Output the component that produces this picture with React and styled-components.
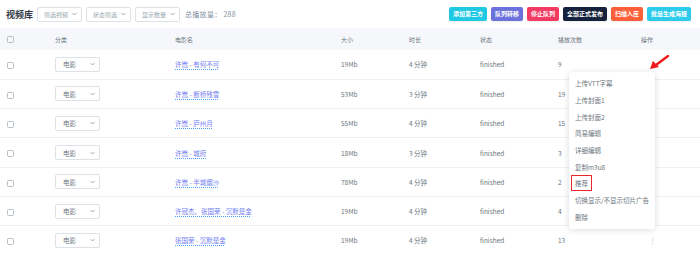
import styled, { createGlobalStyle } from "styled-components";

const GlobalStyle = createGlobalStyle`
  html, body {
    margin: 0;
    padding: 0;
    background: #fff;
    font-family: "Noto Sans CJK SC", "Noto Sans", sans-serif;
  }
`;

const Page = styled.div`
  position: relative;
  width: 700px;
  height: 255px;
  overflow: hidden;
  background: #fff;
`;

const Toolbar = styled.div`
  display: flex;
  align-items: center;
  height: 28px;
  padding: 0 6px;
  gap: 4px;
`;

const Title = styled.span`
  font-size: 9px;
  font-weight: 700;
  color: #313a46;
`;

const FilterSelect = styled.div`
  display: flex;
  align-items: center;
  justify-content: space-between;
  box-sizing: border-box;
  width: 45px;
  height: 15px;
  padding: 0 4px 0 6px;
  border: 1px solid #dee2e6;
  border-radius: 2px;
  font-size: 6px;
  color: #98a6ad;
  background: #fff;
`;

const Total = styled.span`
  font-size: 7px;
  color: #8391a2;
  margin-left: 1px;
  letter-spacing: 0.3px;
`;

const Spacer = styled.div`
  flex: 1;
`;

const Buttons = styled.div`
  display: flex;
  gap: 4px;
  margin-right: 3px;
`;

const ActionButton = styled.button`
  height: 14px;
  padding: 0 4px;
  border: none;
  border-radius: 2px;
  background: ${(p) => p.$bg};
  color: #fff;
  font-family: "Noto Sans CJK SC", sans-serif;
  font-weight: 700;
  font-size: 6px;
  line-height: 14px;
  box-shadow: 0 1px 2px rgba(0, 0, 0, 0.08);
`;

const Table = styled.table`
  width: 700px;
  border-collapse: collapse;
  table-layout: fixed;
  font-size: 6.5px;
  color: #6c757d;
`;

const HeadCell = styled.th`
  height: 22px;
  padding: 0;
  text-align: left;
  font-weight: 400;
  font-size: 6px;
  color: #6c757d;
  background: #f5f7fa;
  width: ${(p) => p.$w}px;
  padding-left: ${(p) => p.$pl || 0}px;
`;

const Row = styled.tr`
  height: 29.3px;
  border-bottom: 1px solid #eef1f4;
`;

const Cell = styled.td`
  padding: 0;
  padding-left: ${(p) => p.$pl || 0}px;
  vertical-align: middle;
`;

const Check = styled.span`
  display: inline-block;
  width: 5px;
  height: 5px;
  border: 1px solid #b7bec6;
  border-radius: 1.5px;
  vertical-align: middle;
`;

const TypeSelect = styled(FilterSelect)`
  color: #6c757d;
  padding-left: 7px;
  font-size: 6.5px;
`;

const FilmLink = styled.span`
  color: #727cf5;
  text-decoration: underline dotted #4aa3ff;
  text-underline-offset: 1.5px;
`;

const Dots = styled.span`
  display: inline-block;
  margin-left: 8px;
  color: ${(p) => (p.$light ? "#d5d9de" : "#a0a8b1")};
  font-size: 7px;
  font-weight: 700;
`;

const Menu = styled.div`
  position: absolute;
  left: 569px;
  top: 72px;
  width: 86px;
  padding: 3px 0 4px;
  background: #fff;
  border-radius: 3px;
  box-shadow: 0 1px 6px rgba(49, 58, 70, 0.18);
  display: flex;
  flex-direction: column;
`;

const MenuItem = styled.div`
  height: 16.7px;
  display: flex;
  align-items: center;
  padding-left: 6px;
  font-size: 6.5px;
  color: #6c757d;
`;

const Marked = styled.span`
  border: 1px solid #e8262c;
  padding: 2px 3px;
  margin-left: -4px;
`;

const Arrow = styled.svg`
  position: absolute;
  left: 648px;
  top: 55px;
`;

const Chevron = () => (
  <svg width="5" height="4" viewBox="0 0 10 6">
    <path d="M1 1l4 4 4-4" fill="none" stroke="#8a949e" strokeWidth="1.6" />
  </svg>
);

const buttons = [
  ["添加第三方", "#1fc8e3"],
  ["队列转移", "#6b72dc"],
  ["停止队列", "#f23a62"],
  ["全部正式发布", "#16213c"],
  ["扫描入库", "#fb5f3a"],
  ["批量生成海报", "#2ccbec"],
];

const rows = [
  ["许嵩 - 有何不可", "19Mb", 4, 9],
  ["许嵩 - 断桥残雪", "53Mb", 3, 19],
  ["许嵩 - 庐州月", "55Mb", 4, 15],
  ["许嵩 - 城府", "18Mb", 3, 3],
  ["许嵩 - 半城烟沙", "78Mb", 4, 2],
  ["许冠杰、张国荣 - 沉默是金", "19Mb", 4, 4],
  ["张国荣 - 沉默是金", "19Mb", 4, 13],
];

const menuItems = [
  "上传VTT字幕",
  "上传封面1",
  "上传封面2",
  "简易编辑",
  "详细编辑",
  "复制m3u8",
  "推荐",
  "切换显示/不显示切片广告",
  "删除",
];

export default function App() {
  return (
    <Page>
      <GlobalStyle />
      <Toolbar>
        <Title>视频库</Title>
        <FilterSelect>
          筛选视频 <Chevron />
        </FilterSelect>
        <FilterSelect>
          状态筛选 <Chevron />
        </FilterSelect>
        <FilterSelect>
          显示数量 <Chevron />
        </FilterSelect>
        <Total>总播放量： 288</Total>
        <Spacer />
        <Buttons>
          {buttons.map(([t, c]) => (
            <ActionButton key={t} $bg={c}>
              {t}
            </ActionButton>
          ))}
        </Buttons>
      </Toolbar>
      <Table>
        <thead>
          <tr>
            <HeadCell $w={48} $pl={7}>
              <Check />
            </HeadCell>
            <HeadCell $w={120}>分类</HeadCell>
            <HeadCell $w={166}>电影名</HeadCell>
            <HeadCell $w={68}>大小</HeadCell>
            <HeadCell $w={71}>时长</HeadCell>
            <HeadCell $w={78}>状态</HeadCell>
            <HeadCell $w={83}>播放次数</HeadCell>
            <HeadCell>操作</HeadCell>
          </tr>
        </thead>
        <tbody>
          {rows.map(([name, size, dur, plays], i) => (
            <Row key={name}>
              <Cell $pl={7}>
                <Check />
              </Cell>
              <Cell>
                <TypeSelect>
                  电影 <Chevron />
                </TypeSelect>
              </Cell>
              <Cell>
                <FilmLink>{name}</FilmLink>
              </Cell>
              <Cell>{size}</Cell>
              <Cell>{dur} 分钟</Cell>
              <Cell>finished</Cell>
              <Cell>{plays}</Cell>
              <Cell>
                <Dots $light={i === rows.length - 1}>⋮</Dots>
              </Cell>
            </Row>
          ))}
        </tbody>
      </Table>
      <Menu>
        {menuItems.map((m) => (
          <MenuItem key={m}>{m === "推荐" ? <Marked>{m}</Marked> : m}</MenuItem>
        ))}
      </Menu>
      <Arrow width="22" height="16" viewBox="0 0 22 16">
        <path d="M20 1L8 10" stroke="#f01a1a" strokeWidth="2.4" strokeLinecap="round" />
        <path d="M2 14L5 6L11 12Z" fill="#f01a1a" />
      </Arrow>
    </Page>
  );
}
